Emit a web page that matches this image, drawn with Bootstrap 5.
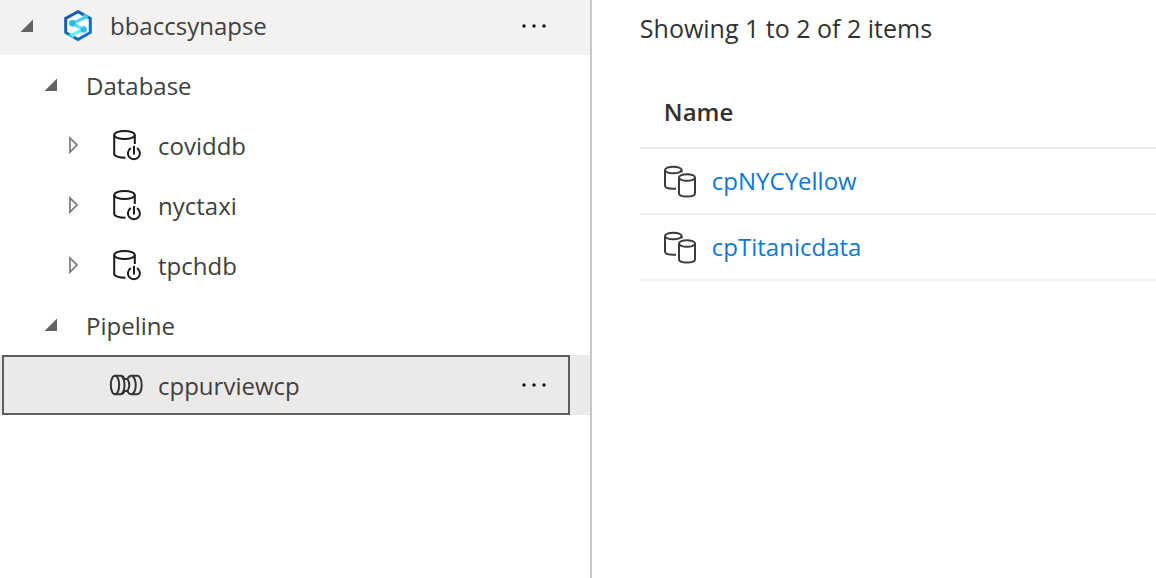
<!DOCTYPE html>
<html lang="en">
<head>
<meta charset="utf-8">
<meta name="viewport" content="width=device-width, initial-scale=1">
<title>Synapse assets</title>
<link href="https://cdn.jsdelivr.net/npm/bootstrap@5.3.0/dist/css/bootstrap.min.css" rel="stylesheet">
<style>
body{font-family:"Open Sans","Noto Sans",sans-serif;font-size:24px;line-height:32px;color:#323130;background:#fff}
.tree-pane{flex:0 0 51.2%;border-right:2px solid #c8c8c8}
.tree-row{height:60px;padding-right:20px}
.root-row{height:55px;padding-bottom:4px;background:#f3f2f1}
.level-0{padding-left:20px}
.level-1{padding-left:44px}
.level-2{padding-left:68px}
.tree-label{color:#403f3e;padding-top:2px}
.root-row .tree-label{padding-top:0}
.toggle,.more{border:0;padding:0;background:none;display:flex;align-items:center;flex-shrink:0}
.toggle{width:42px}
.more{width:40px;height:40px;justify-content:center}
.root-row .more{margin-right:16px}
.icon-slot{width:36px;margin-right:12px;display:flex;justify-content:center;flex-shrink:0}
.root-row .toggle{width:40px}
.root-row .icon-slot{margin-right:14px}
.selected-row{background:#ebeae9;padding:0 20px 0 2px}
.selected-box{border:2px solid #605e5c;height:60px;padding-left:104px;padding-right:14px}
.selected-box .icon-slot{margin-right:14px}
.list-pane{padding:12px 0 0 48px;min-width:0}
.item-count{font-size:25px}
.asset-table{margin-top:36px;border-collapse:collapse}
.asset-table th{font-weight:600;padding:16px 24px 19px;border-bottom:2px solid #e8e8e8}
.asset-table td{padding:0 24px;height:66px;border-bottom:2px solid #f1f0ef}
.asset-link{color:#0f78d0;text-decoration:none}
.asset-icon{margin-right:15px;flex-shrink:0}
</style>
<script src="https://cdn.jsdelivr.net/npm/bootstrap@5.3.0/dist/js/bootstrap.bundle.min.js"></script>
</head>
<body>
<svg width="0" height="0" class="position-absolute" aria-hidden="true">
  <defs>
    <linearGradient id="hexBlue" x1="0" y1="0" x2="1" y2="1"><stop offset="0" stop-color="#1b559c"/><stop offset=".5" stop-color="#1767b8"/><stop offset="1" stop-color="#1474cc"/></linearGradient>
    <linearGradient id="ribbon" x1="0" y1="0" x2="0" y2="1"><stop offset="0" stop-color="#43cdec"/><stop offset="1" stop-color="#7ceefb"/></linearGradient>
  </defs>
  <symbol id="open" viewBox="0 0 14 14"><path d="M13 .5V13H.5z" fill="#646362"/></symbol>
  <symbol id="closed" viewBox="0 0 12 18"><path d="M2 2v14l7-7z" fill="none" stroke="#777" stroke-width="1.7"/></symbol>
  <symbol id="dots" viewBox="0 0 24 4"><g fill="#111"><circle cx="2" cy="2" r="1.700"/><circle cx="12" cy="2" r="1.700"/><circle cx="22" cy="2" r="1.700"/></g></symbol>
  <symbol id="database" viewBox="0 0 30 32"><g fill="none" stroke="#1b1b1b" stroke-width="2"><ellipse cx="11.500" cy="6" rx="10.300" ry="4"/><path d="M1.200 6v19c0 2 4.500 3.800 11.300 3.800M21.800 6v9"/><path d="M17.800 19.200a6 6 0 1 0 6.200 0"/><path d="M21 17v8.500"/></g></symbol>
  <symbol id="pipe" viewBox="0 0 34 22"><g fill="none" stroke="#333" stroke-width="2"><ellipse cx="6" cy="11" rx="4.200" ry="9.300"/><path d="M6 1.700h5.500c2 0 3.300 1.200 4 3.300h3c.8-2.100 2-3.300 4-3.300h6c2.300 0 4.200 4 4.200 9.300s-1.900 9.300-4.200 9.300h-6c-2 0-3.200-1.200-4-3.300h-3c-.7 2.100-2 3.300-4 3.300H6M12.500 2c4 4 4 14 0 18M18.500 5c2.100 3.500 2.100 8.500 0 12M23.500 1.900c4.300 4 4.300 14.200 0 18.200"/></g></symbol>
  <symbol id="pools" viewBox="0 0 33 33"><g fill="none" stroke="#3b3a39" stroke-width="2"><ellipse cx="9.300" cy="5" rx="8.300" ry="3.300"/><path d="M1 5v15.500c0 2 3.500 3.200 8 3.200h3M17.600 5v2.500"/><ellipse cx="23" cy="12.500" rx="8" ry="3.300"/><path d="M15 12.500v15.800c0 4.400 16 4.400 16 0V12.500"/></g></symbol>
</svg>

<div class="d-flex min-vh-100">
  <nav class="tree-pane" aria-label="Sources">
    <div class="tree-row root-row level-0 d-flex align-items-center">
      <button class="toggle" aria-label="Collapse bbaccsynapse"><svg width="14" height="14"><use href="#open"/></svg></button>
      <span class="icon-slot"><svg width="30" height="33" viewBox="0 0 30 33" aria-hidden="true">
        <path d="M15 2.600 27.300 9.500v14L15 30.500 2.700 23.500v-14z" fill="#f7fcff" stroke="url(#hexBlue)" stroke-width="3"/>
        <path d="M20.500 5.700 25 8.300M6 25.300l5 2.900" fill="none" stroke="#3cc4ef" stroke-width="3"/>
        <path d="M23.500 8 9.500 14.200 20.500 20.600 8.500 26.200" fill="none" stroke="url(#ribbon)" stroke-width="3.400" stroke-linejoin="round"/>
        <circle cx="9.300" cy="14.200" r="3.200" fill="#2db9df"/><circle cx="20.700" cy="20.500" r="3.200" fill="#2fbfe4"/>
      </svg></span>
      <span class="tree-label flex-grow-1">bbaccsynapse</span>
      <button class="more" aria-label="More actions for bbaccsynapse"><svg width="24" height="4"><use href="#dots"/></svg></button>
    </div>
    <div class="tree-row level-1 d-flex align-items-center">
      <button class="toggle" aria-label="Collapse Database"><svg width="14" height="14"><use href="#open"/></svg></button>
      <span class="tree-label">Database</span>
    </div>
    <div class="tree-row level-2 d-flex align-items-center">
      <button class="toggle" aria-label="Expand coviddb"><svg width="12" height="18"><use href="#closed"/></svg></button>
      <span class="icon-slot"><svg width="30" height="32"><use href="#database"/></svg></span>
      <span class="tree-label">coviddb</span>
    </div>
    <div class="tree-row level-2 d-flex align-items-center">
      <button class="toggle" aria-label="Expand nyctaxi"><svg width="12" height="18"><use href="#closed"/></svg></button>
      <span class="icon-slot"><svg width="30" height="32"><use href="#database"/></svg></span>
      <span class="tree-label">nyctaxi</span>
    </div>
    <div class="tree-row level-2 d-flex align-items-center">
      <button class="toggle" aria-label="Expand tpchdb"><svg width="12" height="18"><use href="#closed"/></svg></button>
      <span class="icon-slot"><svg width="30" height="32"><use href="#database"/></svg></span>
      <span class="tree-label">tpchdb</span>
    </div>
    <div class="tree-row level-1 d-flex align-items-center">
      <button class="toggle" aria-label="Collapse Pipeline"><svg width="14" height="14"><use href="#open"/></svg></button>
      <span class="tree-label">Pipeline</span>
    </div>
    <div class="selected-row">
      <div class="selected-box d-flex align-items-center">
        <span class="icon-slot"><svg width="34" height="22"><use href="#pipe"/></svg></span>
        <span class="tree-label flex-grow-1">cppurviewcp</span>
        <button class="more" aria-label="More actions for cppurviewcp"><svg width="24" height="4"><use href="#dots"/></svg></button>
      </div>
    </div>
  </nav>
  <main class="list-pane flex-grow-1">
    <p class="item-count mb-0">Showing 1 to 2 of 2 items</p>
    <table class="asset-table w-100">
      <thead><tr><th scope="col">Name</th></tr></thead>
      <tbody>
        <tr><td><div class="d-flex align-items-center"><svg class="asset-icon" width="33" height="33"><use href="#pools"/></svg><a class="asset-link" href="#">cpNYCYellow</a></div></td></tr>
        <tr><td><div class="d-flex align-items-center"><svg class="asset-icon" width="33" height="33"><use href="#pools"/></svg><a class="asset-link" href="#">cpTitanicdata</a></div></td></tr>
      </tbody>
    </table>
  </main>
</div>
</body>
</html>
